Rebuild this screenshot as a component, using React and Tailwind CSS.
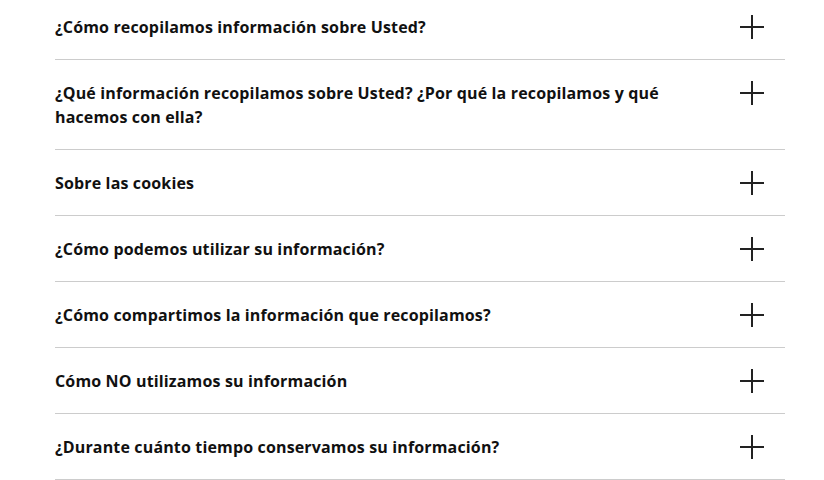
import React, { useState } from 'react';

const items = [
  '¿Cómo recopilamos información sobre Usted?',
  '¿Qué información recopilamos sobre Usted? ¿Por qué la recopilamos y qué hacemos con ella?',
  'Sobre las cookies',
  '¿Cómo podemos utilizar su información?',
  '¿Cómo compartimos la información que recopilamos?',
  'Cómo NO utilizamos su información',
  '¿Durante cuánto tiempo conservamos su información?',
];

const PlusIcon = () => (
  <svg width="24" height="24" viewBox="0 0 24 24" className="shrink-0">
    <line x1="12" y1="0" x2="12" y2="24" stroke="#222" strokeWidth="2" />
    <line x1="0" y1="12" x2="24" y2="12" stroke="#222" strokeWidth="2" />
  </svg>
);

const App = () => {
  const [open, setOpen] = useState(null);

  return (
    <div className="min-h-screen bg-white font-['Open_Sans',sans-serif]">
      <div className="ml-[55px] w-[730px] -mt-[6px]">
        {items.map((title, i) => (
          <div key={i} className="border-b border-[#cccccc]">
            <button
              onClick={() => setOpen(open === i ? null : i)}
              className="w-full flex items-start justify-between pt-[21px] pb-[20px] pr-[21px] text-left"
            >
              <span className="w-[625px] text-[16px] leading-[24px] font-bold tracking-[0.15px] text-[#111]">{title}</span>
              <PlusIcon />
            </button>
          </div>
        ))}
      </div>
    </div>
  );
};

export default App;
